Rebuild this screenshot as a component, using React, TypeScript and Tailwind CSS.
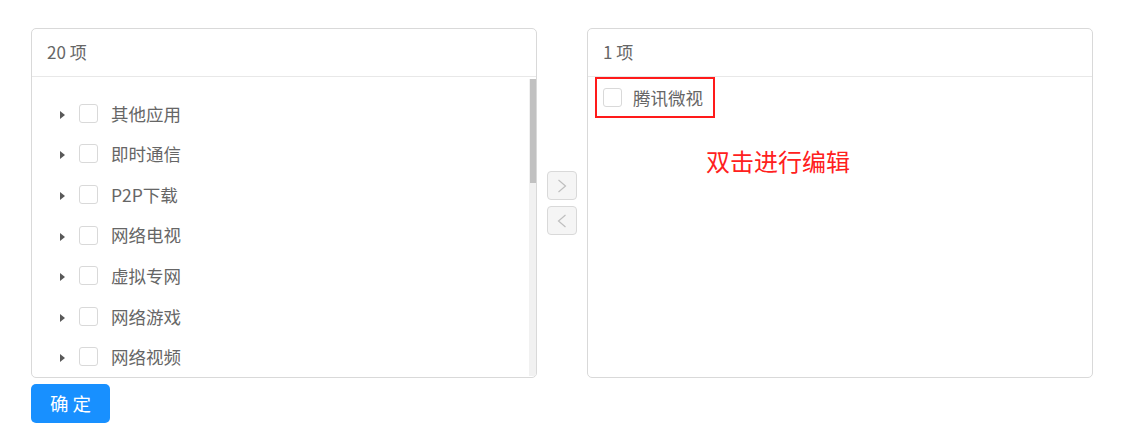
import React from "react";

const items = ["其他应用", "即时通信", "P2P下载", "网络电视", "虚拟专网", "网络游戏", "网络视频"];

function Checkbox() {
  return <span className="inline-block w-[19px] h-[19px] border border-[#d9d9d9] rounded-[3px] bg-white shrink-0" />;
}

function Caret() {
  return (
    <svg width="5" height="8" viewBox="0 0 5 8" className="shrink-0 mt-[3px]">
      <path d="M0 0 L5 4 L0 8 Z" fill="#595959" />
    </svg>
  );
}

export default function App() {
  const font = { fontFamily: '"Noto Sans CJK SC", "Noto Sans", sans-serif' };
  return (
    <div className="pt-[28px] pl-[31px] bg-white w-[1143px] h-[437px] text-[#666666]" style={font}>
      <div className="flex items-center">
        {/* Left panel */}
        <div className="w-[506px] h-[350px] border border-[#d9d9d9] rounded-[5px] flex flex-col overflow-hidden">
          <div className="h-[48px] shrink-0 border-b border-[#e8e8e8] flex items-center pl-[15px] pb-[2px] text-[17px] leading-none">
            20 项
          </div>
          <div className="flex flex-1 min-h-0">
            <div className="flex-1 pt-[16px] overflow-hidden">
              {items.map((t) => (
                <div key={t} className="h-[40.6px] flex items-center">
                  <div className="w-[47px] flex justify-end pr-[14px]">
                    <Caret />
                  </div>
                  <Checkbox />
                  <span className="ml-[13px] text-[17.5px] leading-none">{t}</span>
                </div>
              ))}
            </div>
            <div className="w-[7px] mt-[2px] mb-[1px] bg-[#f1f1f1] flex flex-col">
              <div className="h-[104px] bg-[#c1c1c1] mx-[0.5px]" />
            </div>
          </div>
        </div>

        {/* Middle buttons */}
        <div className="w-[50px] flex flex-col items-center gap-[6px]">
          <div className="w-[30px] h-[29px] border border-[#d9d9d9] bg-[#f5f5f5] rounded-[4px] flex items-center justify-center">
            <svg width="10" height="14" viewBox="0 0 10 14">
              <path d="M1.5 1 L8.5 7 L1.5 13" fill="none" stroke="#bfbfbf" strokeWidth="1.2" />
            </svg>
          </div>
          <div className="w-[30px] h-[29px] border border-[#d9d9d9] bg-[#f5f5f5] rounded-[4px] flex items-center justify-center">
            <svg width="10" height="14" viewBox="0 0 10 14">
              <path d="M8.5 1 L1.5 7 L8.5 13" fill="none" stroke="#bfbfbf" strokeWidth="1.2" />
            </svg>
          </div>
        </div>

        {/* Right panel */}
        <div className="w-[506px] h-[350px] border border-[#d9d9d9] rounded-[5px] flex flex-col overflow-hidden">
          <div className="h-[48px] shrink-0 border-b border-[#e8e8e8] flex items-center pl-[15px] pb-[2px] text-[17px] leading-none">
            1 项
          </div>
          <div className="pl-[7px]">
            <div className="w-[120px] h-[41px] border-2 border-[#ff1a1a] flex items-center pl-[6px]">
              <Checkbox />
              <span className="ml-[11px] text-[17.5px] leading-none">腾讯微视</span>
            </div>
            <div className="ml-[111px] mt-[31px] text-[24px] leading-none text-[#ff2020]">双击进行编辑</div>
          </div>
        </div>
      </div>
      <button className="mt-[6px] w-[79px] h-[39px] rounded-[5px] bg-[#1890ff] text-white text-[18.5px] leading-none flex items-center justify-center">
        确 定
      </button>
    </div>
  );
}
